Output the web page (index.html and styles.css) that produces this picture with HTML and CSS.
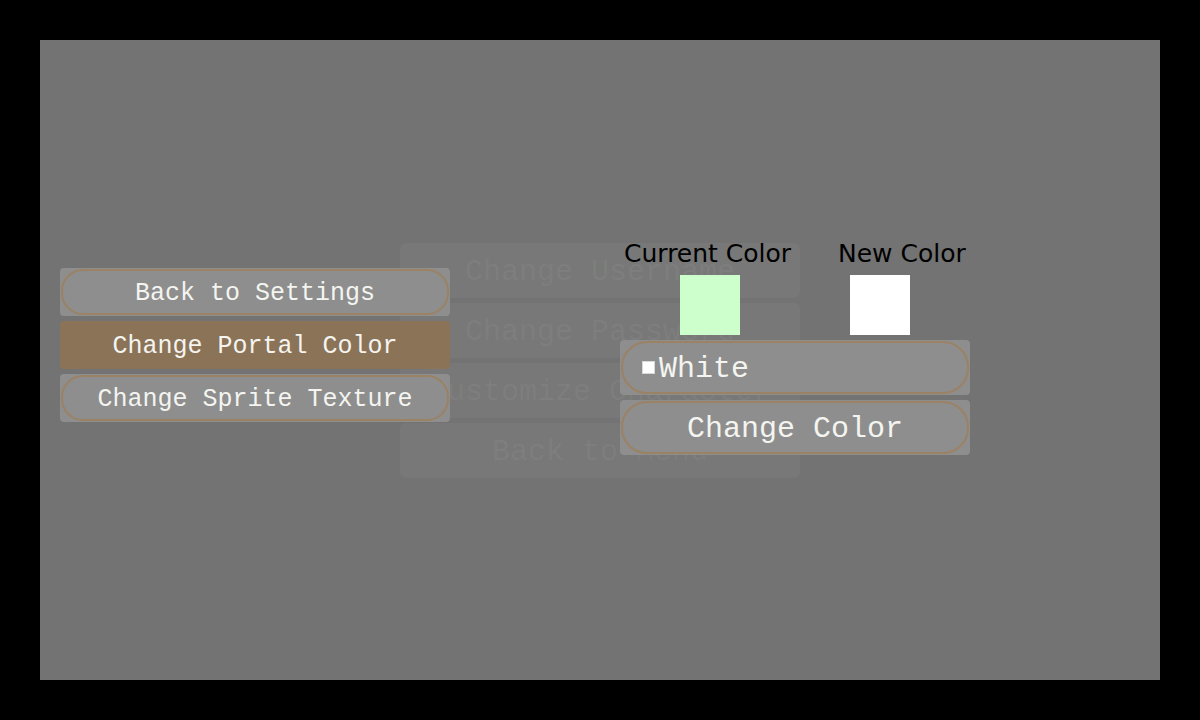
FILE: index.html
```html
<!DOCTYPE html>
<html>
<head>
<meta charset="utf-8">
<link rel="stylesheet" href="styles.css">
</head>
<body>
<div class="panel">
  <div class="layer bg-menu">
    <div class="bg-item">Change Username</div>
    <div class="bg-item">Change Password</div>
    <div class="bg-item">Customize Character</div>
    <div class="bg-item">Back to Menu</div>
  </div>
  <div class="layer left-menu">
    <div class="btn"><div class="pill">Back to Settings</div></div>
    <div class="btn active"><div class="pill">Change Portal Color</div></div>
    <div class="btn"><div class="pill">Change Sprite Texture</div></div>
  </div>
  <div class="layer color-panel">
    <div class="labels">
      <span class="label current">Current Color</span>
      <span class="label new">New Color</span>
    </div>
    <div class="swatches">
      <div class="swatch cur"></div>
      <div class="swatch nw"></div>
    </div>
    <div class="btn big"><div class="pill select"><span class="mini"></span>White</div></div>
    <div class="btn big"><div class="pill">Change Color</div></div>
  </div>
</div>
</body>
</html>
```
FILE: styles.css
```css
html, body {
  margin: 0;
  padding: 0;
  background: #000;
}
body {
  padding: 40px;
  width: 1120px;
  height: 640px;
}
.panel {
  width: 1120px;
  height: 640px;
  background: #727372;
  display: grid;
  grid-template: 1fr / 1fr;
  overflow: hidden;
}
.layer {
  grid-area: 1 / 1;
  display: flex;
  flex-direction: column;
}
.bg-menu {
  padding: 203px 0 0 360px;
  width: 400px;
  gap: 5px;
}
.bg-item {
  height: 55px;
  background: #777877;
  border-radius: 6px;
  display: flex;
  align-items: center;
  justify-content: center;
  padding-top: 2px;
  box-sizing: border-box;
  font-family: "Liberation Mono", "Courier New", monospace;
  font-size: 30px;
  color: #7d7e7d;
  white-space: nowrap;
}
.left-menu {
  padding: 228px 0 0 20px;
  width: 390px;
  gap: 5px;
}
.btn {
  height: 48px;
  background: #8d8e8d;
  border-radius: 4px;
  padding: 1px;
  box-sizing: border-box;
  display: flex;
}
.pill {
  flex: 1;
  border: 2px solid #9c8264;
  border-radius: 22px;
  display: flex;
  align-items: center;
  justify-content: center;
  padding-top: 2px;
  font-family: "Liberation Mono", "Courier New", monospace;
  font-size: 25px;
  color: #f4f4f0;
  white-space: nowrap;
}
.btn.active {
  background: #8b7357;
}
.btn.active .pill {
  border-color: transparent;
}
.color-panel {
  padding: 200px 0 0 580px;
  width: 350px;
}
.labels {
  position: relative;
  height: 28px;
  font-family: "DejaVu Sans", sans-serif;
  font-size: 25px;
  color: #000;
  line-height: 28px;
}
.label.current { position: absolute; left: 4px; }
.label.new { position: absolute; left: 218px; }
.swatches {
  display: flex;
  margin-top: 7px;
  padding-left: 60px;
  gap: 110px;
}
.swatch {
  width: 60px;
  height: 60px;
}
.swatch.cur { background: #ccffcc; }
.swatch.nw { background: #ffffff; }
.btn.big {
  height: 55px;
  margin-top: 5px;
}
.btn.big .pill {
  font-size: 30px;
  border-radius: 26px;
}
.pill.select {
  justify-content: flex-start;
  padding-left: 19px;
}
.mini {
  width: 11px;
  height: 11px;
  background: #fff;
  border: 1px solid #d8d8d8;
  margin-right: 4px;
  margin-top: -2px;
}
```
